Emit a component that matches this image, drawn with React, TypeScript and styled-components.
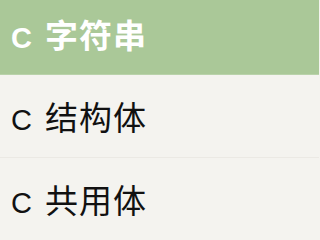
import styled, { createGlobalStyle } from 'styled-components';

const GlobalStyle = createGlobalStyle`
  html, body {
    margin: 0;
    padding: 0;
    background: #f4f3ef;
  }
  body {
    font-family: "Liberation Sans", "Noto Sans CJK SC", sans-serif;
  }
`;

const items = [
  { lang: 'C', name: '字符串', active: true },
  { lang: 'C', name: '结构体' },
  { lang: 'C', name: '共用体' },
];

const App = () => {
  return (
    <>
      <GlobalStyle />
      <Styled.List>
        {items.map((v) => (
          <Styled.Item key={v.name} $active={v.active}>
            <Styled.Lang>{v.lang}</Styled.Lang>
            <Styled.Name>{v.name}</Styled.Name>
          </Styled.Item>
        ))}
      </Styled.List>
    </>
  );
};

export default App;

const Styled = {
  List: styled.ul`
    list-style: none;
    margin: 0;
    padding: 0;
    width: 319px;
  `,
  Item: styled.li<{ $active?: boolean }>`
    display: flex;
    align-items: baseline;
    gap: 13px;
    box-sizing: border-box;
    height: ${(p) => (p.$active ? '75px' : '83px')};
    padding: ${(p) => (p.$active ? '18px' : '25px')} 0 0 11px;
    font-weight: ${(p) => (p.$active ? 700 : 400)};
    color: ${(p) => (p.$active ? '#ffffff' : '#111111')};
    background: ${(p) => (p.$active ? '#aac898' : '#f4f3ef')};
    border-bottom: 1px solid ${(p) => (p.$active ? '#b9d2aa' : '#ebe9e4')};
    white-space: nowrap;
  `,
  Lang: styled.span`
    font-size: 29px;
    line-height: 1;
  `,
  Name: styled.span`
    font-family: "Noto Sans CJK SC", sans-serif;
    font-size: 33px;
    line-height: 1;
    letter-spacing: 1px;
  `,
};
